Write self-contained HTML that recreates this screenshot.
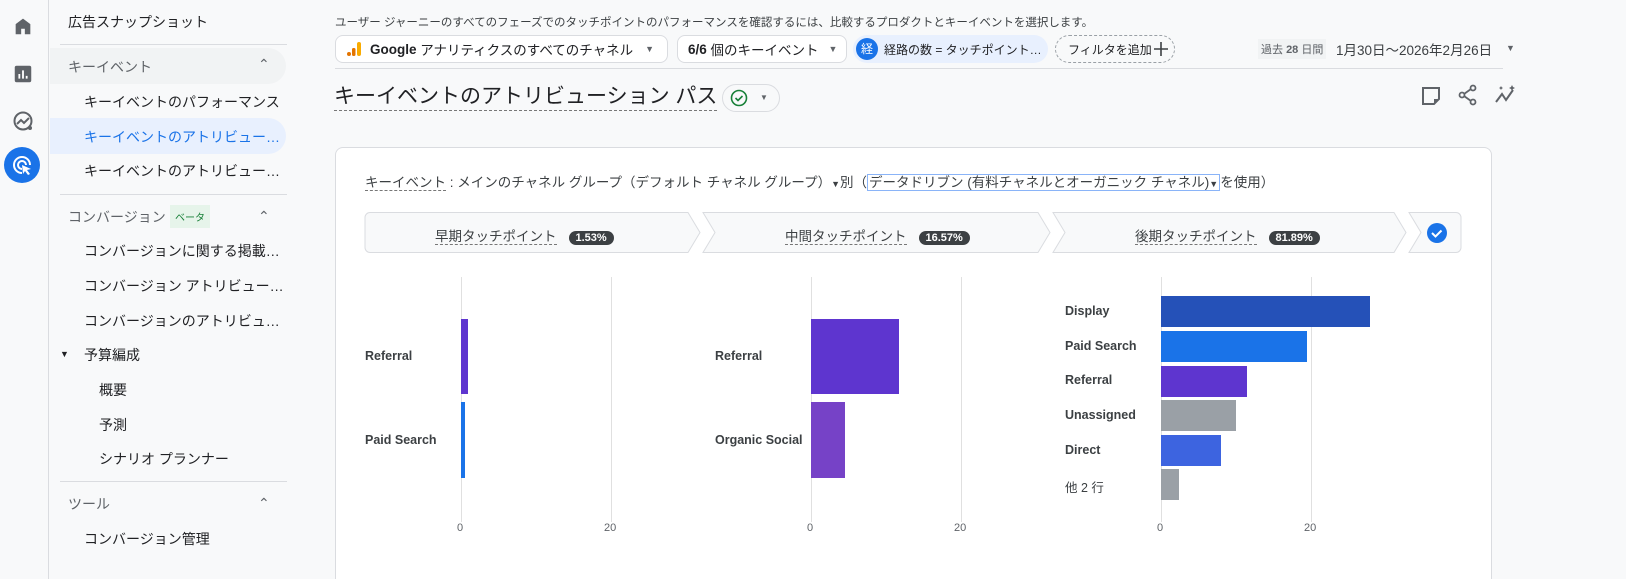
<!DOCTYPE html>
<html><head><meta charset="utf-8"><style>
*{margin:0;padding:0;box-sizing:border-box}
html,body{width:1626px;height:579px;overflow:hidden}
body{background:#f8f9fa;font-family:"Liberation Sans","Noto Sans CJK JP",sans-serif;color:#202124;position:relative}
.a{position:absolute;white-space:nowrap}
.rail{left:0;top:0;width:49px;height:579px;border-right:1px solid #dadce0;background:#f8f9fa}
.nav{font-size:14px;color:#202124}
.hl{position:absolute;left:50px;width:236px;border-radius:0 20px 20px 0}
.sep{position:absolute;left:60px;width:227px;height:1px;background:#dadce0}
.chip{position:absolute;height:28px;border:1px solid #dadce0;border-radius:8px;background:#fff;font-size:13.5px;display:flex;align-items:center;padding:0 10px;white-space:nowrap}
.lbl{font-size:12.5px;color:#3c4043;font-weight:bold}
.grid{position:absolute;width:1px;background:#e0e0e0;top:277px;height:245px}
.tick{position:absolute;font-size:11px;color:#5f6368}
.dash{border-bottom:1px dashed #777}
.pill{display:inline-block;background:#3c4043;color:#fff;font-size:11px;border-radius:9px;padding:1px 7px;margin-left:12px;font-weight:bold}
</style></head><body>
<div class="a rail"></div>
<svg class="a" style="left:12px;top:15px" width="22" height="22" viewBox="0 0 24 24"><path d="M4 21V10l8-6 8 6v11h-6v-6h-4v6z" fill="#5f6368"/></svg>
<svg class="a" style="left:12px;top:63px" width="22" height="22" viewBox="0 0 24 24"><rect x="3" y="3" width="18" height="18" rx="2" fill="#5f6368"/><path d="M8 17v-5M12 17V8M16 17v-3" stroke="#fff" stroke-width="2"/></svg>
<svg class="a" style="left:11px;top:109px" width="24" height="24" viewBox="0 0 24 24"><circle cx="12" cy="12" r="8.5" fill="none" stroke="#5f6368" stroke-width="2"/><path d="M6 15l4-4 3 3 5-5" fill="none" stroke="#5f6368" stroke-width="2"/><circle cx="19" cy="19" r="2" fill="#5f6368"/></svg>
<div class="a" style="left:4px;top:147px;width:36px;height:36px;border-radius:50%;background:#1a73e8"></div>
<svg class="a" style="left:10px;top:153px" width="24" height="24" viewBox="0 0 24 24"><path d="M12 20a8 8 0 1 1 8-8M12 16a4 4 0 1 1 4-4" fill="none" stroke="#fff" stroke-width="2"/><path d="M12 12l9 4-4 1 3 4-2 1-3-4-2 3z" fill="#fff"/></svg>

<div class="a nav" style="left:68px;top:12px">広告スナップショット</div>
<div class="sep" style="top:44px"></div>
<div class="hl" style="top:48px;height:36px;background:#f1f3f4"></div>
<div class="a nav" style="left:68px;top:57px;color:#5f6368">キーイベント</div>
<div class="a" style="left:258px;top:56px;font-size:14px;color:#5f6368">⌃</div>
<div class="a nav" style="left:84px;top:92px">キーイベントのパフォーマンス</div>
<div class="hl" style="top:118px;height:36px;background:#e8f0fe"></div>
<div class="a nav" style="left:84px;top:127px;color:#1a73e8">キーイベントのアトリビュー…</div>
<div class="a nav" style="left:84px;top:161px">キーイベントのアトリビュー…</div>
<div class="sep" style="top:194px"></div>
<div class="a nav" style="left:68px;top:207px;color:#5f6368">コンバージョン</div>
<div class="a" style="left:170px;top:205px;font-size:10px;color:#188038;background:#e6f4ea;padding:4px 5px">ベータ</div>
<div class="a" style="left:258px;top:208px;font-size:14px;color:#5f6368">⌃</div>
<div class="a nav" style="left:84px;top:241px">コンバージョンに関する掲載…</div>
<div class="a nav" style="left:84px;top:276px">コンバージョン アトリビュー…</div>
<div class="a nav" style="left:84px;top:311px">コンバージョンのアトリビュ…</div>
<div class="a" style="left:60px;top:349px;font-size:9px">▼</div>
<div class="a nav" style="left:84px;top:345px">予算編成</div>
<div class="a nav" style="left:99px;top:380px">概要</div>
<div class="a nav" style="left:99px;top:415px">予測</div>
<div class="a nav" style="left:99px;top:449px">シナリオ プランナー</div>
<div class="sep" style="top:481px"></div>
<div class="a nav" style="left:68px;top:494px;color:#5f6368">ツール</div>
<div class="a" style="left:258px;top:495px;font-size:14px;color:#5f6368">⌃</div>
<div class="a nav" style="left:84px;top:529px">コンバージョン管理</div>

<div class="a" style="left:335px;top:14px;font-size:11.5px;color:#3c4043">ユーザー ジャーニーのすべてのフェーズでのタッチポイントのパフォーマンスを確認するには、比較するプロダクトとキーイベントを選択します。</div>
<div class="chip" style="left:335px;top:35px;width:333px"><svg width="16" height="14" viewBox="0 0 16 14" style="margin-right:8px"><circle cx="3" cy="12" r="2" fill="#e37400"/><rect x="6" y="6" width="3.5" height="8" rx="1.5" fill="#e37400"/><rect x="11" y="0" width="4" height="14" rx="2" fill="#f9ab00"/></svg><b style="font-weight:bold">Google</b>&nbsp;アナリティクスのすべてのチャネル<span style="margin-left:12px;font-size:9px;color:#5f6368">▼</span></div>
<div class="chip" style="left:677px;top:35px;width:170px"><b>6/6</b>&nbsp;個のキーイベント<span style="margin-left:10px;font-size:9px;color:#5f6368">▼</span></div>
<div class="a" style="left:853px;top:35px;width:195px;height:28px;border-radius:14px;background:#e8f0fe"></div>
<div class="a" style="left:856px;top:38px;width:22px;height:22px;border-radius:50%;background:#1a73e8;color:#fff;font-size:12px;text-align:center;line-height:22px">経</div>
<div class="a" style="left:884px;top:41px;font-size:12px">経路の数 = タッチポイント…</div>
<div class="a" style="left:1055px;top:35px;width:120px;height:28px;border:1px dashed #9aa0a6;border-radius:14px"></div>
<div class="a" style="left:1068px;top:41px;font-size:12px">フィルタを追加</div>
<svg class="a" style="left:1154px;top:42px" width="14" height="14" viewBox="0 0 14 14"><path d="M7 0v14M0 7h14" stroke="#3c4043" stroke-width="1.6"/></svg>
<div class="a" style="left:1258px;top:39px;font-size:11px;color:#5f6368;background:#f1f3f4;padding:2px 3px">過去 <b>28</b> 日間</div>
<div class="a" style="left:1336px;top:39px;font-size:13.5px;color:#3c4043">1月30日～2026年2月26日</div>
<div class="a" style="left:1506px;top:43px;font-size:9px;color:#5f6368">▼</div>
<div class="a" style="left:335px;top:68px;width:1168px;height:1px;background:#dadce0"></div>

<div class="a" style="left:334px;top:83px;font-size:21px;border-bottom:1px dashed #777;line-height:27px">キーイベントのアトリビューション パス</div>
<div class="a" style="left:722px;top:84px;width:58px;height:28px;border:1px solid #dadce0;border-radius:14px;background:#f8f9fa"></div>
<svg class="a" style="left:730px;top:89px" width="18" height="18" viewBox="0 0 18 18"><circle cx="9" cy="9" r="7.5" fill="none" stroke="#188038" stroke-width="1.6"/><path d="M5.5 9l2.5 2.5 4.5-4.5" fill="none" stroke="#188038" stroke-width="1.6"/></svg>
<div class="a" style="left:760px;top:93px;font-size:8px;color:#5f6368">▼</div>
<svg class="a" style="left:1420px;top:85px" width="22" height="22" viewBox="0 0 22 22"><path d="M3 3h16v11l-5 5H3z" fill="none" stroke="#5f6368" stroke-width="2"/><path d="M14 19v-5h5" fill="#5f6368"/></svg>
<svg class="a" style="left:1457px;top:84px" width="22" height="22" viewBox="0 0 22 22"><circle cx="16" cy="4" r="2.5" fill="none" stroke="#5f6368" stroke-width="1.8"/><circle cx="5" cy="11" r="2.5" fill="none" stroke="#5f6368" stroke-width="1.8"/><circle cx="16" cy="18" r="2.5" fill="none" stroke="#5f6368" stroke-width="1.8"/><path d="M7 10l7-5M7 12l7 5" stroke="#5f6368" stroke-width="1.8"/></svg>
<svg class="a" style="left:1494px;top:84px" width="24" height="22" viewBox="0 0 24 22"><path d="M2 18l6-8 4 6 7-10" fill="none" stroke="#5f6368" stroke-width="2"/><path d="M18 1l1 2 2 1-2 1-1 2-1-2-2-1 2-1zM7 2l.7 1.3L9 4l-1.3.7L7 6l-.7-1.3L5 4l1.3-.7z" fill="#5f6368"/></svg>

<div class="a" style="left:335px;top:147px;width:1157px;height:432px;background:#fff;border:1px solid #dadce0;border-bottom:none;border-radius:8px 8px 0 0"></div>
<div class="a" style="left:365px;top:171px;font-size:13.5px;color:#3c4043"><span class="dash">キーイベント</span> : メインのチャネル グループ（デフォルト チャネル グループ）<span style="font-size:9px">▼</span>別（<span style="border:1px solid #8ab4f8;padding:0 1px">データドリブン (有料チャネルとオーガニック チャネル)<span style="font-size:9px">▼</span></span>を使用）</div>

<svg class="a" style="left:364px;top:212px" width="1100" height="42">
<g fill="#f8f9fa" stroke="#dadce0">
<path d="M6 .5H324l12 20-12 20H6a5 5 0 0 1-5-5V5.5a5 5 0 0 1 5-5z"/>
<path d="M339 .5H674l12 20-12 20H339l12-20z"/>
<path d="M689 .5H1030l12 20-12 20H689l12-20z"/>
<path d="M1045 .5H1092a5 5 0 0 1 5 5v30a5 5 0 0 1-5 5H1045l12-20z"/>
</g>
<circle cx="1073" cy="21" r="10" fill="#1a73e8"/><path d="M1068 21l3.5 3.5 6-6" fill="none" stroke="#fff" stroke-width="2"/>
</svg>
<div class="a" style="left:435px;top:225px;font-size:13.5px;color:#3c4043"><span class="dash">早期タッチポイント</span><span class="pill">1.53%</span></div>
<div class="a" style="left:785px;top:225px;font-size:13.5px;color:#3c4043"><span class="dash">中間タッチポイント</span><span class="pill">16.57%</span></div>
<div class="a" style="left:1135px;top:225px;font-size:13.5px;color:#3c4043"><span class="dash">後期タッチポイント</span><span class="pill">81.89%</span></div>

<div class="grid" style="left:461px"></div><div class="grid" style="left:611px"></div>
<div class="grid" style="left:811px"></div><div class="grid" style="left:961px"></div>
<div class="grid" style="left:1161px"></div><div class="grid" style="left:1311px"></div>
<div class="tick" style="left:457px;top:522px">0</div><div class="tick" style="left:604px;top:522px">20</div>
<div class="tick" style="left:807px;top:522px">0</div><div class="tick" style="left:954px;top:522px">20</div>
<div class="tick" style="left:1157px;top:522px">0</div><div class="tick" style="left:1304px;top:522px">20</div>

<div class="a lbl" style="left:365px;top:349px">Referral</div>
<div class="a lbl" style="left:365px;top:433px">Paid Search</div>
<div class="a" style="left:461px;top:319px;width:7px;height:75px;background:#5e35cf"></div>
<div class="a" style="left:461px;top:402px;width:4px;height:76px;background:#1a73e8"></div>

<div class="a lbl" style="left:715px;top:349px">Referral</div>
<div class="a lbl" style="left:715px;top:433px">Organic Social</div>
<div class="a" style="left:811px;top:319px;width:88px;height:75px;background:#5e35cf"></div>
<div class="a" style="left:811px;top:402px;width:34px;height:76px;background:#7642c7"></div>

<div class="a lbl" style="left:1065px;top:304px">Display</div>
<div class="a lbl" style="left:1065px;top:339px">Paid Search</div>
<div class="a lbl" style="left:1065px;top:373px">Referral</div>
<div class="a lbl" style="left:1065px;top:408px">Unassigned</div>
<div class="a lbl" style="left:1065px;top:443px">Direct</div>
<div class="a" style="left:1065px;top:477px;font-size:12.5px;color:#3c4043">他 2 行</div>
<div class="a" style="left:1161px;top:296px;width:209px;height:31px;background:#2551b8"></div>
<div class="a" style="left:1161px;top:331px;width:146px;height:31px;background:#1a73e8"></div>
<div class="a" style="left:1161px;top:366px;width:86px;height:31px;background:#5e35cf"></div>
<div class="a" style="left:1161px;top:400px;width:75px;height:31px;background:#9aa0a6"></div>
<div class="a" style="left:1161px;top:435px;width:60px;height:31px;background:#3d64e0"></div>
<div class="a" style="left:1161px;top:469px;width:18px;height:31px;background:#9aa0a6"></div>
</body></html>
